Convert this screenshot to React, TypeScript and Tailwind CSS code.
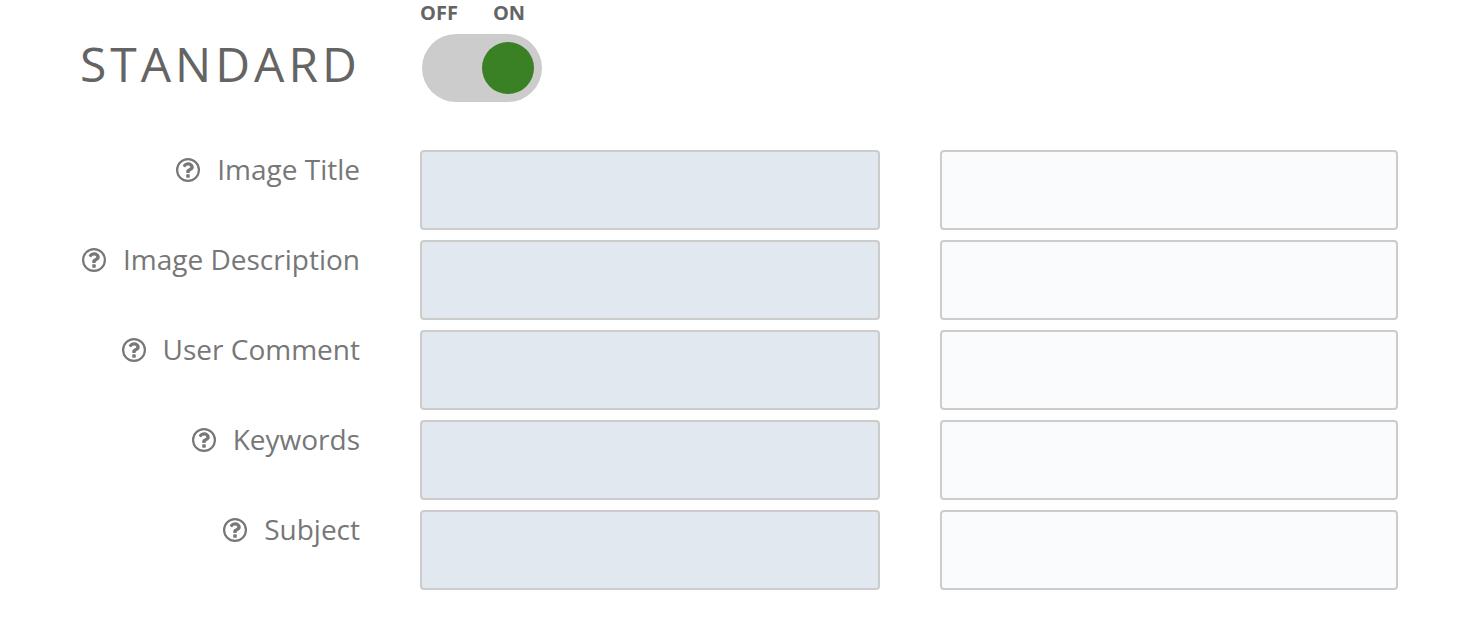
import { useState } from 'react'

const fields = [
  { id: 'image-title', label: 'Image Title' },
  { id: 'image-description', label: 'Image Description' },
  { id: 'user-comment', label: 'User Comment' },
  { id: 'keywords', label: 'Keywords' },
  { id: 'subject', label: 'Subject' },
]

function QuestionIcon() {
  return (
    <svg viewBox="128 128 1536 1536" className="size-6" fill="currentColor" aria-hidden="true">
      <path d="M1008 1200v160q0 14-9 23t-23 9h-160q-14 0-23-9t-9-23v-160q0-14 9-23t23-9h160q14 0 23 9t9 23zm256-496q0 50-15 90t-45.5 69-52 44-59.5 36q-32 18-46.5 28t-26 24-11.5 29v32q0 14-9 23t-23 9h-160q-14 0-23-9t-9-23v-68q0-35 10.5-64.5t24-47.5 39-35.5 41-25.5 44.5-21q53-25 75-43t22-49q0-42-43.5-71.5t-95.5-29.5q-56 0-95 27-29 20-80 83-9 12-25 12-11 0-19-6l-108-82q-10-7-12-20t5-23q122-192 349-192 129 0 238.5 89.5t109.5 214.5z" />
      <circle cx="896" cy="896" r="698" fill="none" stroke="currentColor" strokeWidth="140" />
    </svg>
  )
}

export default function App() {
  const [enabled, setEnabled] = useState(true)

  return (
    <main className="bg-white pl-20 pr-[76px] pb-12 font-['Open_Sans',sans-serif] text-[#777777]">
      {/* Group header */}
      <div className="grid grid-cols-[280px_1fr] gap-x-[60px]">
        <h2 className="pt-8 text-5xl leading-16 tracking-[4px] uppercase text-[#646464]">
          Standard
        </h2>
        <div>
          <div className="flex gap-[35px] text-xl leading-[26px] font-bold text-[#646464]">
            <span>OFF</span>
            <span>ON</span>
          </div>
          <label className="ml-0.5 mt-2 flex h-[68px] w-[120px] cursor-pointer items-center rounded-full bg-[#cccccc] p-2">
            <input
              type="checkbox"
              checked={enabled}
              onChange={(e) => setEnabled(e.target.checked)}
              aria-label="Standard fields"
              className="peer sr-only"
            />
            <span className="size-[52px] rounded-full bg-[#888888] transition-transform peer-checked:translate-x-[52px] peer-checked:bg-[#3a8024]" />
          </label>
        </div>
      </div>

      {/* Current value on the left, new value on the right */}
      <div className="mt-12 flex flex-col gap-2.5">
        {fields.map((field) => (
          <div key={field.id} className="grid grid-cols-[280px_460fr_458fr] gap-x-[60px]">
            <div className="flex h-10 items-center justify-end gap-[17px] whitespace-nowrap">
              <button type="button" aria-label={`Help for ${field.label}`}>
                <QuestionIcon />
              </button>
              <label htmlFor={field.id} className="pb-0.5 text-[28px] leading-[38px]">
                {field.label}
              </label>
            </div>
            <textarea
              readOnly
              aria-label={`Current ${field.label}`}
              className="h-20 w-full resize-none rounded-sm border-2 border-[#cccccc] bg-[#e1e8ef] p-2 text-2xl"
            />
            <textarea
              id={field.id}
              className="h-20 w-full resize-none rounded-sm border-2 border-[#cccccc] bg-[#fafbfd] p-2 text-2xl"
            />
          </div>
        ))}
      </div>
    </main>
  )
}
